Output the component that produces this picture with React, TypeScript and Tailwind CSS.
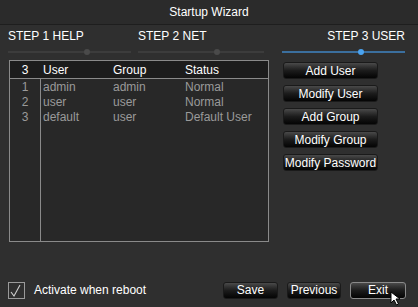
import React from 'react';

const users = [
  { id: 1, user: 'admin', group: 'admin', status: 'Normal' },
  { id: 2, user: 'user', group: 'user', status: 'Normal' },
  { id: 3, user: 'default', group: 'user', status: 'Default User' },
];

const sideButtons = ['Add User', 'Modify User', 'Add Group', 'Modify Group', 'Modify Password'];

const Slider: React.FC<{ active?: boolean; knob: number }> = ({ active, knob }) => (
  <div className="relative h-[6px] w-full">
    <div
      className={`absolute left-0 right-0 top-[2px] h-[2px] ${active ? 'bg-[#3b6f9e]' : 'bg-[#3c3c3c]'}`}
    ></div>
    <div
      className={`absolute top-0 h-[6px] w-[6px] rounded-full ${active ? 'bg-[#4aa3f0]' : 'bg-[#4a4a4a]'}`}
      style={{ left: knob }}
    ></div>
  </div>
);

const DarkButton: React.FC<{ label: string; w: string; highlight?: boolean }> = ({ label, w, highlight }) => (
  <div
    className={`flex h-[17px] ${w} items-center justify-center whitespace-nowrap rounded-[3px] bg-gradient-to-b from-[#4a4a4a] via-[#1c1c1c] to-[#050505] text-[12px] leading-none text-white ${
      highlight ? 'border border-[#8a8a8a]' : 'border border-[#1a1a1a]'
    }`}
  >
    {label}
  </div>
);

export default function App() {
  return (
    <div
      className="flex h-[307px] w-[418px] flex-col overflow-hidden bg-[#2f2f2f] text-white"
      style={{ fontFamily: '"Liberation Sans", Arial, sans-serif' }}
    >
      <div className="flex h-[25px] items-center justify-center border-b border-[#1e1e1e] bg-[#2b2b2b] pb-[1px] text-[12px]">
        Startup Wizard
      </div>

      <div className="flex gap-[7px] pl-[8px] pr-[13px] pt-[4px]">
        <div className="flex w-[123px] flex-col gap-[5px]">
          <span className="text-[12px] leading-[15px]">STEP 1 HELP</span>
          <Slider knob={76} />
        </div>
        <div className="flex w-[126px] flex-col gap-[5px]">
          <span className="text-[12px] leading-[15px]">STEP 2 NET</span>
          <Slider knob={76} />
        </div>
        <div className="ml-auto flex w-[123px] flex-col items-end gap-[5px]">
          <span className="text-[12px] leading-[15px]">STEP 3 USER</span>
          <Slider active knob={76} />
        </div>
      </div>

      <div className="flex gap-[14px] pl-[9px] pt-[5px]">
        <div className="flex h-[182px] w-[260px] flex-col border border-[#8a8a8a] bg-[#282828] text-[12px]">
          <div className="flex h-[18px] items-center border-b border-[#8a8a8a] bg-[#1c1c1c] leading-none">
            <span className="w-[30px] text-center">3</span>
            <span className="w-[73px] pl-[3px]">User</span>
            <span className="w-[72px]">Group</span>
            <span>Status</span>
          </div>
          <div className="relative flex-1 text-[#9a9a9a]">
            <div className="absolute bottom-0 left-[30px] top-0 w-px bg-[#8a8a8a]"></div>
            {users.map((u) => (
              <div key={u.id} className="flex h-[15px] items-center leading-none">
                <span className="w-[30px] text-center">{u.id}</span>
                <span className="w-[73px] pl-[3px]">{u.user}</span>
                <span className="w-[72px]">{u.group}</span>
                <span>{u.status}</span>
              </div>
            ))}
          </div>
        </div>

        <div className="flex flex-col gap-[6px] pt-[2px]">
          {sideButtons.map((b) => (
            <DarkButton key={b} label={b} w="w-[95px]" />
          ))}
        </div>
      </div>

      <div className="mt-auto flex items-center pb-[8px] pl-[8px] pr-[12px]">
        <div className="flex h-[17px] w-[17px] items-center justify-center border border-[#9a9a9a]">
          <svg width="15" height="15" viewBox="0 0 15 15" fill="none">
            <path d="M2 9 L5 13 L11 2" stroke="#cfcfcf" strokeWidth="1.1" />
          </svg>
        </div>
        <span className="ml-[9px] text-[12px]">Activate when reboot</span>
        <div className="ml-auto flex gap-[9px]">
          <DarkButton label="Save" w="w-[55px]" />
          <DarkButton label="Previous" w="w-[54px]" />
          <div className="relative">
            <DarkButton label="Exit" w="w-[56px]" highlight />
            <svg className="absolute left-[40px] top-[9px]" width="12" height="16" viewBox="0 0 12 16">
              <path d="M1 1 L1 12 L4 9 L6.5 14 L8.5 13 L6 8 L10 8 Z" fill="white" stroke="black" strokeWidth="1" />
            </svg>
          </div>
        </div>
      </div>
    </div>
  );
}
